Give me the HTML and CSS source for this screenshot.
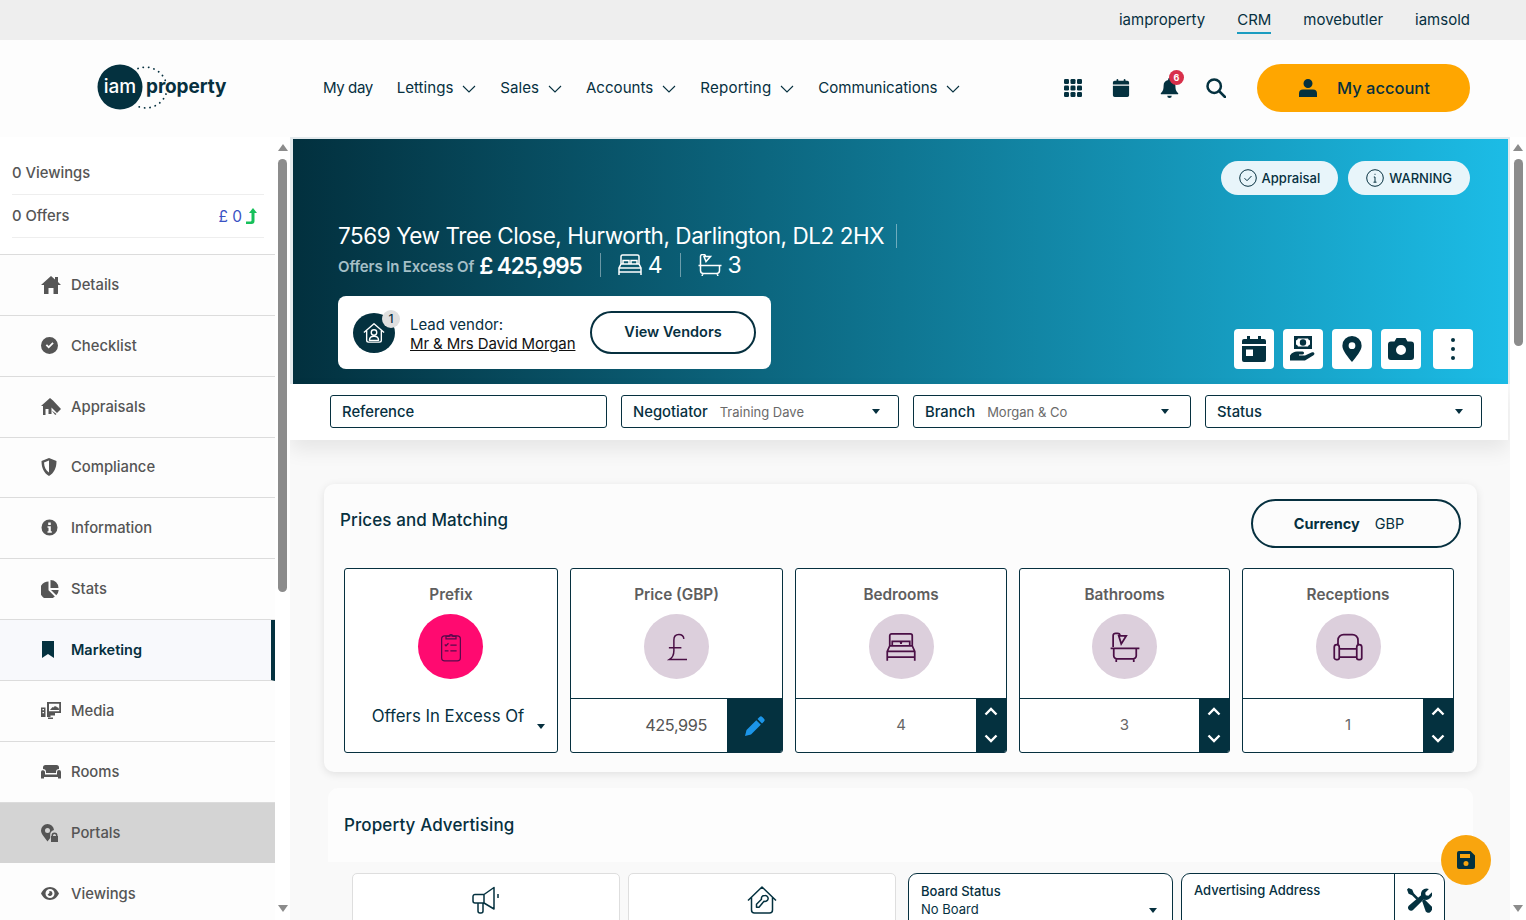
FILE: index.html
```html
<!DOCTYPE html>
<html lang="en">
<head>
<meta charset="utf-8">
<title>iam property</title>
<link rel="stylesheet" href="styles.css">
</head>
<body>
<div class="topbar">
  <a class="toplink">iamproperty</a>
  <a class="toplink toplink-active">CRM</a>
  <a class="toplink">movebutler</a>
  <a class="toplink">iamsold</a>
</div>
<header class="header">
  <div class="logo">
    <svg width="134" height="50" viewBox="0 0 134 50">
      <path class="logo-ring" d="M41 5.500A21.500 21.500 0 0 1 68.500 18"/>
      <path class="logo-ring" d="M69 31A21.500 21.500 0 0 1 40 43"/>
      <circle cx="23" cy="24" r="22.500" fill="#04313f"/>
      <text x="23" y="29.500" class="logo-iam" text-anchor="middle">iam</text>
      <text x="49" y="30" class="logo-prop">property</text>
    </svg>
  </div>
  <nav class="nav">
    <a class="nav-item nav-first">My day</a>
    <a class="nav-item">Lettings<svg class="chev" viewBox="0 0 14 8"><path d="M1 1l6 6 6-6"/></svg></a>
    <a class="nav-item">Sales<svg class="chev" viewBox="0 0 14 8"><path d="M1 1l6 6 6-6"/></svg></a>
    <a class="nav-item">Accounts<svg class="chev" viewBox="0 0 14 8"><path d="M1 1l6 6 6-6"/></svg></a>
    <a class="nav-item nav-wide">Reporting<svg class="chev" viewBox="0 0 14 8"><path d="M1 1l6 6 6-6"/></svg></a>
    <a class="nav-item nav-narrow">Communications<svg class="chev" viewBox="0 0 14 8"><path d="M1 1l6 6 6-6"/></svg></a>
  </nav>
  <div class="tools">
    <svg class="tool" viewBox="0 0 18 18"><g fill="#04313f"><rect x="0" y="0" width="5" height="5" rx="1.200"/><rect x="6.500" y="0" width="5" height="5" rx="1.200"/><rect x="13" y="0" width="5" height="5" rx="1.200"/><rect x="0" y="6.500" width="5" height="5" rx="1.200"/><rect x="6.500" y="6.500" width="5" height="5" rx="1.200"/><rect x="13" y="6.500" width="5" height="5" rx="1.200"/><rect x="0" y="13" width="5" height="5" rx="1.200"/><rect x="6.500" y="13" width="5" height="5" rx="1.200"/><rect x="13" y="13" width="5" height="5" rx="1.200"/></g></svg>
    <svg class="tool" viewBox="0 0 18 20"><g fill="#04313f"><rect x="4" y="0" width="2" height="4" rx="1"/><rect x="12" y="0" width="2" height="4" rx="1"/><path d="M2 2h14a2 2 0 0 1 2 2v2H0V4a2 2 0 0 1 2-2zM0 7.500h18V18a2 2 0 0 1-2 2H2a2 2 0 0 1-2-2z"/></g></svg>
    <div class="bell">
      <svg class="tool" viewBox="0 0 20 22"><path fill="#04313f" d="M10 0a1.500 1.500 0 0 1 1.500 1.500v.7A6.500 6.500 0 0 1 16.500 8.500c0 5 1.300 6.400 3 8.200.4.500.1 1.300-.6 1.300H1.100c-.7 0-1-.8-.6-1.300 1.700-1.800 3-3.200 3-8.200A6.500 6.500 0 0 1 8.500 2.200v-.7A1.500 1.500 0 0 1 10 0zM7.500 19.500h5a2.500 2.500 0 0 1-5 0z"/></svg>
      <span class="bell-badge">6</span>
    </div>
    <svg class="tool" viewBox="0 0 20 20"><g fill="none" stroke="#04313f" stroke-width="2.500"><circle cx="8.200" cy="8.200" r="6.700"/><path d="M13 13l6 6" stroke-linecap="round"/></g></svg>
  </div>
  <a class="account">
    <svg class="account-icon" viewBox="0 0 18 18"><path fill="#04313f" d="M9 0a4.500 4.500 0 1 1 0 9 4.500 4.500 0 0 1 0-9zM4 10.500h10a4 4 0 0 1 4 4V18H0v-3.500a4 4 0 0 1 4-4z"/></svg>
    My account
  </a>
</header>

<div class="page">
  <aside class="sidebar">
    <div class="stats">
      <div class="stat-row"><span>0 Viewings</span></div>
      <div class="stat-row"><span>0 Offers</span>
        <span class="offer-value">£ 0<svg class="up" viewBox="0 0 12 16"><path fill="#16c05a" d="M8 0l4 5H9.500v8a3 3 0 0 1-3 3H1v-2.500h4.500a1 1 0 0 0 1-1V5H4z"/></svg></span></div>
    </div>
    <a class="side-item"><svg class="side-icon" viewBox="0 0 20 18"><path d="M10 0l4 3.500V1h3v5.100L20 9h-3v9h-4.500v-6h-5v6H3V9H0z"/></svg>Details</a>
    <a class="side-item"><svg class="side-icon" viewBox="0 0 20 18"><path fill-rule="evenodd" d="M8.500 0a8.500 8.500 0 1 1 0 17 8.500 8.500 0 0 1 0-17zM4.700 8.500l3 3 5-5-1.300-1.300-3.700 3.700-1.700-1.700z"/></svg>Checklist</a>
    <a class="side-item"><svg class="side-icon" viewBox="0 0 20 18"><path d="M9 0l3 2.600 8 8.400-4 4-5.500-5.600V16H7.500v-5h-3v6H2V8H0zM10.700 12.500l3.500 4.500 1.300-1z"/></svg>Appraisals</a>
    <a class="side-item"><svg class="side-icon" viewBox="0 0 20 18"><path fill-rule="evenodd" d="M8 0l7.500 3c0 7-2.500 12-7.500 15C3 15 .5 10 .5 3zM8 2.500L3 4.500c.2 4.500 1.900 8 5 10z"/></svg>Compliance</a>
    <a class="side-item"><svg class="side-icon" viewBox="0 0 20 18"><path fill-rule="evenodd" d="M8.500 .500a8 8 0 1 1 0 16 8 8 0 0 1 0-16zM7.200 3.500h2.600v2.400H7.200zM6.500 7.300h3.300v5h1v1.500H6.500v-1.500h1v-3.500h-1z"/></svg>Information</a>
    <a class="side-item"><svg class="side-icon" viewBox="0 0 20 18"><path d="M7.500 1.500v8.800l6.300 6.200A8.800 8.800 0 1 1 7.500 1.500zM9.500 0a8 8 0 0 1 8 8h-8zM10 10h7.700a8 8 0 0 1-2.400 5.200z"/></svg>Stats</a>
    <a class="side-item side-active"><svg class="side-icon" viewBox="0 0 20 18"><path d="M1 0h12v17l-6-4-6 4z"/></svg>Marketing</a>
    <a class="side-item"><svg class="side-icon" viewBox="0 0 20 18"><path fill-rule="evenodd" d="M6 0h14v11H14v2.500H9.500V15H6zM8 1.800v7.400h10.200V1.800zM9 8l2.500-3 .8.800c.5-1.800 3-2 3.800-.4 1-.2 2 .8 1.900 2.600zM0 5.500h4.500V15H0zM1.500 7v1.300h1.500V7zM1.500 10v1.300h1.500V10zM7 15.500h5V17H7z"/></svg>Media</a>
    <a class="side-item"><svg class="side-icon" viewBox="0 0 20 18"><path d="M4.500 2h11A2.500 2.500 0 0 1 18 4.500V6a3 3 0 0 0-3 3v1H5V9a3 3 0 0 0-3-3V4.500A2.500 2.500 0 0 1 4.500 2zM0 9a2 2 0 0 1 3.500-1.100c.3.300.5.700.5 1.100v2.500h12V9a2 2 0 0 1 4 0v6.500h-3V14H3v1.500H0z"/></svg>Rooms</a>
    <a class="side-item side-hover"><svg class="side-icon" viewBox="0 0 20 18"><path fill-rule="evenodd" d="M6.500 0A6.500 6.500 0 0 1 13 6a5 5 0 0 0-3.800 4.800V14L6.500 17.500 2 11.500C.8 10 .1 8.300 0 6.500A6.500 6.500 0 0 1 6.500 0zM6.500 4a2.500 2.500 0 1 0 0 5 2.500 2.500 0 0 0 0-5zM13.500 8.500a3 3 0 0 1 3 3V12h.5v6h-7v-6h.5v-.5a3 3 0 0 1 3-3zM13.500 10a1.500 1.500 0 0 0-1.500 1.500V12h3v-.5A1.500 1.500 0 0 0 13.500 10z"/></svg>Portals</a>
    <a class="side-item"><svg class="side-icon" viewBox="0 0 20 18"><path fill-rule="evenodd" d="M9 2c4 0 7.300 2.800 9 6.500C16.300 12.200 13 15 9 15S1.700 12.200 0 8.500C1.700 4.800 5 2 9 2zM9 4a4.500 4.500 0 1 0 0 9 4.500 4.500 0 0 0 0-9zM9 6a2.500 2.500 0 1 1-2.400 3.200A2 2 0 0 0 8.200 6.100z"/></svg>Viewings</a>
  </aside>
  <div class="scrollbar">
    <span class="arrow-up"></span>
    <span class="thumb thumb-side"></span>
    <span class="track-fill"></span>
    <span class="arrow-down"></span>
  </div>

  <main class="main">
    <section class="hero">
      <div class="hero-badges">
        <span class="badge"><svg class="badge-icon" viewBox="0 0 18 18"><circle cx="9" cy="9" r="8.300"/><path d="M5.500 9.200l2.500 2.500 4.500-4.700"/></svg>Appraisal</span>
        <span class="badge"><svg class="badge-icon" viewBox="0 0 18 18"><circle cx="9" cy="9" r="8.300"/><path d="M9 8v5M7.500 13.200h3M7.800 8h1.200M9 4.800v1"/></svg>WARNING</span>
      </div>
      <div class="hero-title"><span>7569 Yew Tree Close, Hurworth, Darlington, DL2 2HX</span><i class="vline vline-title"></i></div>
      <div class="hero-price">
        <span class="price-prefix">Offers In Excess Of</span>
        <span class="price-value">£ 425,995</span>
        <i class="vline"></i>
        <svg class="hero-icon" viewBox="0 0 24 22"><path fill="none" stroke="#fff" stroke-width="1.500" d="M3 10V2.500A1.500 1.500 0 0 1 4.500 1h15A1.500 1.500 0 0 1 21 2.500V10M5 10V6.500h6V10M13 10V6.500h6V10M3 10h18M1 21v-7l2-4h18l2 4v7M1 14h22M1 18h22"/></svg>
        <span class="hero-num">4</span>
        <i class="vline"></i>
        <svg class="hero-icon" viewBox="0 0 24 22"><path fill="none" stroke="#fff" stroke-width="1.500" d="M2.500 11V2.500a2 2 0 0 1 2-2h1a2 2 0 0 1 2 2M6 2.500h6.500L8 7.500zM.5 11.500h23M2.500 11.500v5a3 3 0 0 0 3 3h13a3 3 0 0 0 3-3v-5M5 19.500L4 22M19 19.500l1 2.500"/></svg>
        <span class="hero-num">3</span>
      </div>
      <div class="hero-bottom">
        <div class="vendor">
          <div class="vendor-avatar">
            <svg class="vendor-house" viewBox="0 0 24 24"><g fill="none" stroke="#fff" stroke-width="1.500" stroke-linejoin="round"><path d="M1 11.500L12 2l11 9.500M4 9.500V20a2 2 0 0 0 2 2h12a2 2 0 0 0 2-2V9.500"/><circle cx="12" cy="11.500" r="3"/><path d="M7 20c0-3 2-4.500 5-4.500s5 1.500 5 4.500z"/></g></svg>
            <span class="vendor-count">1</span>
          </div>
          <div class="vendor-text"><span>Lead vendor:</span><a class="vendor-name">Mr &amp; Mrs David Morgan</a></div>
          <a class="pill-btn">View Vendors</a>
        </div>
        <div class="actions">
          <a class="action"><svg class="action-icon" viewBox="0 0 24 26"><path fill-rule="evenodd" fill="#04313f" d="M5 0h3v3h8V0h3v3h3a2 2 0 0 1 2 2v3H0V5a2 2 0 0 1 2-2h3zM0 10h24v14a2 2 0 0 1-2 2H2a2 2 0 0 1-2-2zM4 13.500V20h7v-6.500z"/></svg></a>
          <a class="action"><svg class="action-icon action-wide" viewBox="0 0 26 26"><path fill-rule="evenodd" fill="#04313f" d="M4 0h18v13H4zM8 2.500a2.500 2.500 0 0 1-2 2v4a2.500 2.500 0 0 1 2 2h10a2.500 2.500 0 0 1 2-2v-4a2.500 2.500 0 0 1-2-2zM13 3.300a3.200 3.200 0 1 1 0 6.400 3.200 3.200 0 0 1 0-6.400zM0 19.500c2-3 4.500-4 7-4h5.500c2 0 2 3 0 3H9v1h6l6.500-3c2.500-1 4 1.500 2 2.700L15 24.500H0z"/></svg></a>
          <a class="action"><svg class="action-icon" viewBox="0 0 20 27"><path fill-rule="evenodd" fill="#04313f" d="M10 0a10 10 0 0 1 10 10c0 5-6 12-10 17C6 22 0 15 0 10A10 10 0 0 1 10 0zM10 6.500a3.500 3.500 0 1 0 0 7 3.500 3.500 0 0 0 0-7z"/></svg></a>
          <a class="action"><svg class="action-icon action-wide" viewBox="0 0 26 22"><path fill-rule="evenodd" fill="#04313f" d="M8.500 0h9l2 3.500H23a3 3 0 0 1 3 3V19a3 3 0 0 1-3 3H3a3 3 0 0 1-3-3V6.500a3 3 0 0 1 3-3h3.500zM13 7a5 5 0 1 0 0 10 5 5 0 0 0 0-10z"/></svg></a>
          <a class="action action-more"><svg class="action-dots" viewBox="0 0 6 24"><circle cx="3" cy="3" r="2" fill="#04313f"/><circle cx="3" cy="12" r="2" fill="#04313f"/><circle cx="3" cy="21" r="2" fill="#04313f"/></svg></a>
        </div>
      </div>
    </section>

    <section class="filters">
      <div class="field"><span class="field-label">Reference</span></div>
      <div class="field"><span class="field-label">Negotiator</span><span class="field-value">Training Dave</span><i class="caret"></i></div>
      <div class="field field-branch"><span class="field-label">Branch</span><span class="field-value">Morgan &amp; Co</span><i class="caret"></i></div>
      <div class="field"><span class="field-label">Status</span><i class="caret"></i></div>
    </section>

    <section class="card prices">
      <div class="card-head">
        <h2 class="card-title card-title-up">Prices and Matching</h2>
        <a class="currency"><b>Currency</b><span>GBP</span></a>
      </div>
      <div class="tiles">
        <div class="tile">
          <div class="tile-top">
            <div class="tile-label">Prefix</div>
            <div class="tile-circle tile-circle-pink"><svg class="tile-icon" viewBox="0 0 24 24"><g fill="none" stroke="#5a0a4c" stroke-width="1"><rect x="4.500" y="3" width="15" height="20" rx="2.500"/><path d="M8 5.500V3.500h2.500a1.500 1.500 0 0 1 3 0H16v2zM7 10l1 1 2-2M11.500 10.500h5M7 15h3M11.500 15h5"/></g></svg></div>
          </div>
          <div class="prefix-select"><span>Offers In Excess Of</span><i class="caret caret-prefix"></i></div>
        </div>
        <div class="tile">
          <div class="tile-top tile-top-split">
            <div class="tile-label">Price (GBP)</div>
            <div class="tile-circle"><svg class="tile-icon" viewBox="0 0 24 24"><path fill="none" stroke="#4a0f45" stroke-width="1.200" d="M17.500 5.500a4 4 0 0 0-4-3.500c-2.700 0-4 2-4 4.500V15c0 3-1 5.500-3.500 7H20M5.500 12.500h10"/></svg></div>
          </div>
          <div class="tile-bottom"><span class="tile-value tile-value-price">425,995</span>
            <a class="edit"><svg class="edit-icon" viewBox="0 0 20 20"><path fill="#1c95e8" d="M14.500 1a2 2 0 0 1 2.800 0l1.700 1.700a2 2 0 0 1 0 2.800l-2 2L12.500 3zM11.300 4.200l4.500 4.500L6 18.500 0 20l1.500-6z"/></svg></a></div>
        </div>
        <div class="tile">
          <div class="tile-top tile-top-split">
            <div class="tile-label">Bedrooms</div>
            <div class="tile-circle"><svg class="tile-icon" viewBox="0 0 24 24"><path fill="none" stroke="#4a0f45" stroke-width="1.400" d="M3 11V3a1.500 1.500 0 0 1 1.500-1.500h15A1.500 1.500 0 0 1 21 3v8M5 11V7.500h6.500L12 9.500 12.500 7.500H19V11M1 23v-7.500L3 11h18l2 4.500V23M1 15.500h22M1 20h22"/></svg></div>
          </div>
          <div class="tile-bottom"><span class="tile-value tile-value-step">4</span><div class="stepper"><svg viewBox="0 0 14 9"><path d="M1.500 7.500L7 2l5.500 5.500"/></svg><svg viewBox="0 0 14 9"><path d="M1.500 1.500L7 7l5.500-5.500"/></svg></div></div>
        </div>
        <div class="tile">
          <div class="tile-top tile-top-split">
            <div class="tile-label">Bathrooms</div>
            <div class="tile-circle"><svg class="tile-icon" viewBox="0 0 24 24"><path fill="none" stroke="#4a0f45" stroke-width="1.400" d="M2.500 12V3a2 2 0 0 1 2-2H6a2 2 0 0 1 2 2M7 3h6L9 9.500zM.5 13h23M3 13v6a2.500 2.500 0 0 0 2.500 2.500h13A2.500 2.500 0 0 0 21 19v-6M5 21.500V24M19 21.500V24"/></svg></div>
          </div>
          <div class="tile-bottom"><span class="tile-value tile-value-step">3</span><div class="stepper"><svg viewBox="0 0 14 9"><path d="M1.500 7.500L7 2l5.500 5.500"/></svg><svg viewBox="0 0 14 9"><path d="M1.500 1.500L7 7l5.500-5.500"/></svg></div></div>
        </div>
        <div class="tile">
          <div class="tile-top tile-top-split">
            <div class="tile-label">Receptions</div>
            <div class="tile-circle"><svg class="tile-icon" viewBox="0 0 24 24"><path fill="none" stroke="#4a0f45" stroke-width="1.400" d="M4 10V6.500A4.500 4.500 0 0 1 8.500 2h7A4.500 4.500 0 0 1 20 6.500V10M1 12a2 2 0 0 1 4 0v8.500a1.500 1.500 0 0 1-1.500 1.500h-1A1.500 1.500 0 0 1 1 20.500zM19 12a2 2 0 0 1 4 0v8.500a1.500 1.500 0 0 1-1.500 1.500h-1a1.500 1.500 0 0 1-1.500-1.500zM5 13.500h14M5 20h14"/></svg></div>
          </div>
          <div class="tile-bottom"><span class="tile-value tile-value-step">1</span><div class="stepper"><svg viewBox="0 0 14 9"><path d="M1.500 7.500L7 2l5.500 5.500"/></svg><svg viewBox="0 0 14 9"><path d="M1.500 1.500L7 7l5.500-5.500"/></svg></div></div>
        </div>
      </div>
    </section>

    <section class="advert">
      <div class="advert-head"><h2 class="card-title">Property Advertising</h2></div>
      <div class="advert-grid">
        <div class="adv-tile"><svg class="adv-icon" viewBox="0 0 28 28"><path fill="none" stroke="#04313f" stroke-width="1.500" stroke-linejoin="round" d="M3 8.500h9L22 1.500V23l-10-6H3a2 2 0 0 1-2-2v-4.500a2 2 0 0 1 2-2zM12 8.500V17M6 17v8a2 2 0 0 0 2 2h1a2 2 0 0 0 2-2v-8M26 8v4"/></svg></div>
        <div class="adv-tile"><svg class="adv-icon" viewBox="0 0 30 28"><path fill="none" stroke="#04313f" stroke-width="1.500" stroke-linejoin="round" d="M1 14.500L15 1l14 13.500M4.500 11.500V24a3 3 0 0 0 3 3h15a3 3 0 0 0 3-3V11.500M18 9.500a3 3 0 0 1 2.500 4.800c-1 1.300-2.500 1.200-3.500 1l-5 6H9.500v-3l5-5c-.3-1.500 0-3.800 3.500-3.800z"/></svg></div>
        <div class="adv-field adv-board">
          <div class="adv-text"><span class="adv-label">Board Status</span><span class="adv-value">No Board</span></div>
          <i class="caret"></i>
        </div>
        <div class="adv-field adv-address">
          <span class="adv-label adv-label-addr">Advertising Address</span>
          <div class="adv-tool"><svg class="wrench" viewBox="0 0 24 24"><g fill="#04313f"><path d="M14.500 2.500A6 6 0 0 1 21 1l-3.500 3.500.5 2.500 2.500.5L24 4a6 6 0 0 1-8 7L6.500 20.500a3 3 0 1 1-4-4.200L13.500 7a6 6 0 0 1 1-4.500z"/><path d="M1.500 0L5 1.500 6.500 5 11 9.500 9.200 11.300 4.800 7 1.500 5.500 0 1.500z"/><path d="M14.500 12.500l2-2 7 7c1 1 1 3-.5 5s-3.500 1.500-5 0z"/></g></svg></div>
        </div>
      </div>
    </section>
  </main>
  <div class="scrollbar scrollbar-main">
    <span class="arrow-up"></span>
    <span class="thumb thumb-main"></span>
    <span class="track-fill"></span>
    <span class="arrow-down"></span>
  </div>
</div>

<a class="fab"><svg class="fab-icon" viewBox="0 0 18 18"><path fill-rule="evenodd" fill="#04313f" d="M2 0h11.500L18 4.500V16a2 2 0 0 1-2 2H2a2 2 0 0 1-2-2V2a2 2 0 0 1 2-2zM3 3v4h10V3zM9 10a2.500 2.500 0 1 0 0 5 2.500 2.500 0 0 0 0-5z"/></svg></a>
</body>
</html>
```

FILE: styles.css
```css
* { box-sizing: border-box; }
html, body { margin: 0; height: 920px; overflow: hidden; }
body {
  font-family: Inter, "Liberation Sans", sans-serif;
  color: #06303f;
  background: #fff;
  display: flex;
  flex-direction: column;
  position: relative;
}
a { color: inherit; text-decoration: none; }
h2 { margin: 0; font-weight: 500; }

.topbar {
  height: 40px; background: #eeeeee; display: flex; justify-content: flex-end;
  align-items: center; gap: 32px; padding-right: 56px; flex: none;
}
.toplink { font-size: 15px; line-height: 24px; }
.toplink-active { border-bottom: 2px solid #1b9cc0; margin-top: 2px; }

.header { height: 97px; background: #fdfdfd; display: flex; align-items: center; flex: none; padding: 0 0 2px 97px; }
.logo { width: 226px; height: 50px; margin-top: 1px; }
.logo-ring { fill: none; stroke: #06303f; stroke-width: 1.800; stroke-dasharray: .1 5.300; stroke-linecap: round; }
.logo-iam { font: 500 19px Inter, sans-serif; fill: #fff; }
.logo-prop { font: 700 19px Inter, sans-serif; fill: #06303f; letter-spacing: -.1px; }
.nav { display: flex; align-items: center; gap: 24px; width: 741px; }
.nav-item { font-size: 15.100px; display: flex; align-items: center; gap: 9px; }
.nav-first { letter-spacing: -.45px; }
.nav-wide { letter-spacing: .2px; }
.nav-narrow { letter-spacing: -.05px; }
.chev { width: 14px; height: 8px; fill: none; stroke: #06303f; stroke-width: 1.100; margin-top: 2px; }
.tools { display: flex; align-items: center; width: 193px; }
.tool { width: 18px; height: 18px; margin-right: 30px; display: block; flex: none; }
.bell { position: relative; width: 18px; margin-right: 28px; }
.bell .tool { width: 19px; height: 20px; margin: 0; }
.bell-badge {
  position: absolute; left: 9px; top: -8px; width: 15px; height: 15px; border-radius: 50%;
  background: #d8304b; color: #fff; font-size: 9px; font-weight: 700; line-height: 15px; text-align: center;
}
.tools .tool:last-child { width: 20px; height: 20px; margin-right: 0; }
.account {
  width: 213px; height: 48px; border-radius: 24px; background: #ffa600; display: flex;
  align-items: center; padding-left: 42px; gap: 20px; font-size: 16.500px; font-weight: 500;
}
.account-icon { width: 18px; height: 18px; }

.page { flex: 1; display: flex; min-height: 0; }
.sidebar { width: 275px; flex: none; background: #fdfdfd; overflow: hidden; }
.stats { height: 118px; padding: 14px 11px 0 12px; background: #fff; border-bottom: 1px solid #dcdcdc; }
.stat-row {
  height: 43px; display: flex; justify-content: space-between; align-items: center;
  border-bottom: 1px solid #eeeeee; font-size: 14.800px; font-weight: 500; color: #555;
}
.stat-row:first-child { height: 44px; }
.offer-value { color: #3a52c4; font-weight: 400; font-size: 15.500px; display: flex; align-items: center; gap: 3px; padding-right: 7px; }
.up { width: 12px; height: 16px; }
.side-item {
  display: flex; align-items: center; height: 60.850px; padding-left: 41px; gap: 10px;
  font-size: 14.800px; font-weight: 500; color: #555; border-bottom: 1px solid #dcdcdc;
}
.side-icon { width: 20px; height: 18px; fill: #555; flex: none; }
.side-active { background: #f8f9fc; color: #06303f; border-right: 4px solid #04313f; font-weight: 600; font-size: 14.500px; }
.side-active .side-icon { fill: #04313f; }
.side-hover { background: #d4d4d4; border-bottom: 0; }
.side-item:last-child { border-bottom: 0; }

.scrollbar { width: 15px; flex: none; background: #fff; display: flex; flex-direction: column; align-items: center; padding: 7px 0 8px; position: relative; }
.scrollbar-main { width: 16px; }
.arrow-up, .arrow-down { width: 0; height: 0; border-left: 5px solid transparent; border-right: 5px solid transparent; flex: none; }
.arrow-up { border-bottom: 7px solid #8c8c8c; }
.arrow-down { border-top: 7px solid #8c8c8c; }
.thumb { width: 9px; background: #8c8c8c; border-radius: 5px; margin-top: 8px; flex: none; }
.thumb-side { height: 433px; }
.thumb-main { height: 187px; }
.track-fill { flex: 1; }

.main { flex: 1; min-width: 0; background: #f9f9f9; overflow: hidden; }
.hero {
  height: 247px; border: solid #e4eaed; border-width: 2px 2px 0 3px;
  background: linear-gradient(90deg, #02303e 0%, #1cbce6 100%);
  padding: 22px 0 0 45px; display: flex; flex-direction: column; color: #fff;
}
.hero-badges { display: flex; justify-content: flex-end; gap: 10px; padding-right: 38px; height: 34px; }
.badge {
  display: flex; align-items: center; gap: 5px; height: 34px; padding: 0 18px; border-radius: 17px;
  background: #e8f5fa; color: #06303f; font-size: 13px; font-weight: 500;
}
.badge-icon { width: 18px; height: 18px; fill: none; stroke: #06303f; stroke-width: 1; }
.hero-title { margin-top: 26px; height: 30px; display: flex; align-items: center; font-size: 22.500px; line-height: 30px; letter-spacing: -.44px; }
.vline { display: block; width: 1px; height: 24px; background: rgba(255,255,255,.4); flex: none; }
.vline-title { margin-left: 12px; }
.hero-price { height: 30px; margin-top: -1px; display: flex; align-items: center; }
.price-prefix { font-size: 15px; font-weight: 600; color: #a5bfc6; letter-spacing: -.13px; margin-top: 3px; }
.price-value { font-size: 22.500px; font-weight: 600; margin: 0 18px 0 5px; letter-spacing: -1.100px; }
.hero-icon { width: 24px; height: 22px; margin: 0 6px 0 17px; }
.hero-num { font-size: 23px; margin-right: 17px; }
.hero-bottom { margin-top: 16px; display: flex; justify-content: space-between; align-items: flex-end; padding-right: 35px; }
.vendor {
  width: 433px; height: 73px; background: #fff; border-radius: 8px; color: #06303f;
  display: flex; align-items: center; padding-left: 15px;
}
.vendor-avatar { width: 42px; height: 40px; border-radius: 50%; background: #04313f; position: relative; display: flex; align-items: center; justify-content: center; flex: none; }
.vendor-house { width: 22px; height: 22px; }
.vendor-count {
  position: absolute; right: -5px; top: -3px; width: 18px; height: 18px; border-radius: 50%;
  background: #dfdfdf; color: #06303f; font-size: 12px; line-height: 18px; text-align: center; font-weight: 500;
}
.vendor-text { margin-left: 15px; width: 180px; display: flex; flex-direction: column; font-size: 15px; line-height: 19px; flex: none; padding-top: 2px; }
.vendor-name { text-decoration: underline; color: #111; letter-spacing: -.1px; white-space: nowrap; }
.pill-btn {
  width: 166px; height: 43px; border: 2px solid #06303f; border-radius: 22px; display: flex; align-items: center;
  justify-content: center; font-size: 14.500px; font-weight: 600; flex: none; padding-bottom: 2px;
}
.actions { display: flex; gap: 9px; }
.action { width: 40px; height: 40px; background: #fff; border-radius: 4px; display: flex; align-items: center; justify-content: center; }
.action-more { margin-left: 3px; }
.action-icon { width: 24px; height: 26px; }
.action-wide { width: 26px; height: 26px; }
.action-dots { width: 6px; height: 24px; }

.filters {
  height: 56px; background: #fff; display: grid; grid-template-columns: 277px 278px 278px 277px; gap: 14px;
  padding: 11px 26px 12px 40px; box-shadow: 0 10px 20px rgba(0,0,0,.08); margin-right: 2px; position: relative;
}
.field {
  border: 1px solid #06303f; border-radius: 3px; display: flex; align-items: center; padding: 0 11px; position: relative;
}
.field-label { font-size: 14.800px; font-weight: 500; }
.field-value { font-size: 13px; color: #6a6a6a; margin-left: 12px; }
.caret { width: 0; height: 0; border-left: 4.500px solid transparent; border-right: 4.500px solid transparent; border-top: 5px solid #06303f; margin-left: auto; margin-right: 7px; }
.field-branch .caret { margin-right: 10px; }

.card { background: #fcfcfc; border-radius: 10px; box-shadow: 0 2px 8px rgba(0,0,0,.1); }
.prices { margin: 44px 33px 0 34px; height: 288px; padding: 15px 23px 0 20px; }
.card-head { display: flex; justify-content: space-between; align-items: center; height: 49px; margin-left: -4px; margin-right: -7px; }
.card-title { font-size: 17px; color: #06303f; letter-spacing: .1px; }
.card-title-up { margin-top: -8px; }
.currency {
  width: 210px; height: 49px; border: 2px solid #06303f; border-radius: 25px; display: flex; align-items: center;
  justify-content: center; gap: 15px; font-size: 14.500px; padding-right: 14px;
}
.currency b { font-weight: 700; }
.currency span { font-size: 14.500px; }
.tiles { display: grid; grid-template-columns: 214px 213px 212px 211px 212px; gap: 12px; margin-top: 20px; height: 185px; }
.tile { border: 1px solid #06303f; border-radius: 3px; background: #fff; display: flex; flex-direction: column; overflow: hidden; }
.tile-top { height: 130px; flex: none; text-align: center; padding-top: 16px; }
.tile-top-split { border-bottom: 1px solid #06303f; }
.tile-label { font-size: 15.300px; font-weight: 600; color: #5e5e5e; line-height: 20px; }
.tile-circle { width: 65px; height: 65px; border-radius: 50%; background: #dccfdc; margin: 9px auto 0; display: flex; align-items: center; justify-content: center; }
.tile-circle-pink { background: #ff0a70; margin-left: 73px; }
.tile-icon { width: 30px; height: 30px; }
.prefix-select { flex: 1; display: flex; justify-content: center; font-size: 16.800px; position: relative; padding: 5px 24px 0 18px; line-height: 24px; white-space: nowrap; }
.caret-prefix { position: absolute; right: 12px; top: 25px; margin: 0; }
.tile-bottom { flex: 1; display: flex; }
.tile-value { flex: 1; display: flex; align-items: center; justify-content: center; font-size: 15px; color: #666; padding-bottom: 2px; }
.tile-value-step { padding-left: 30px; }
.tile-value-price { justify-content: flex-end; padding-right: 20px; font-size: 16.300px; letter-spacing: -.4px; color: #555; }
.edit { width: 55px; background: #04313f; display: flex; align-items: center; justify-content: center; flex: none; }
.edit-icon { width: 20px; height: 20px; }
.stepper { width: 30px; background: #04313f; display: flex; flex-direction: column; align-items: center; justify-content: space-between; padding: 8px 0 9px; flex: none; }
.stepper svg { width: 14px; height: 9px; fill: none; stroke: #fff; stroke-width: 2.400; display: block; }

.advert { margin: 16px 37px 0 38px; }
.advert-head { height: 74px; background: #fdfdfd; border-radius: 10px 10px 0 0; display: flex; align-items: center; padding-left: 16px; }
.advert-grid { display: grid; grid-template-columns: 268px 268px 269px 264px; column-gap: 8px; margin: 11px 0 0 24px; height: 120px; }
.adv-tile { border: 1px solid #dedede; border-radius: 5px; background: #fff; display: flex; justify-content: center; padding-top: 12px; }
.adv-icon { width: 30px; height: 28px; }
.adv-field { border: 1px solid #06303f; border-radius: 9px 9px 0 0; background: #fff; display: flex; padding: 8px 0 0 12px; }
.adv-board { margin-left: 4px; }
.adv-text { display: flex; flex-direction: column; }
.adv-label { font-size: 13px; line-height: 18px; font-weight: 500; }
.adv-value { font-size: 13px; line-height: 18px; }
.adv-field .caret { margin: 26px 15px 0 auto; }
.adv-address { padding: 0 0 0 12px; }
.adv-label-addr { padding-top: 7px; flex: 1; }
.adv-tool { width: 50px; border-left: 1px solid #06303f; padding: 14px 0 0 12px; }
.wrench { width: 25px; height: 25px; display: block; }

.fab {
  position: absolute; left: 1441px; top: 835px; width: 50px; height: 50px; border-radius: 50%;
  background: #f9a50e; display: flex; align-items: center; justify-content: center;
}
.fab-icon { width: 18px; height: 18px; }
```
